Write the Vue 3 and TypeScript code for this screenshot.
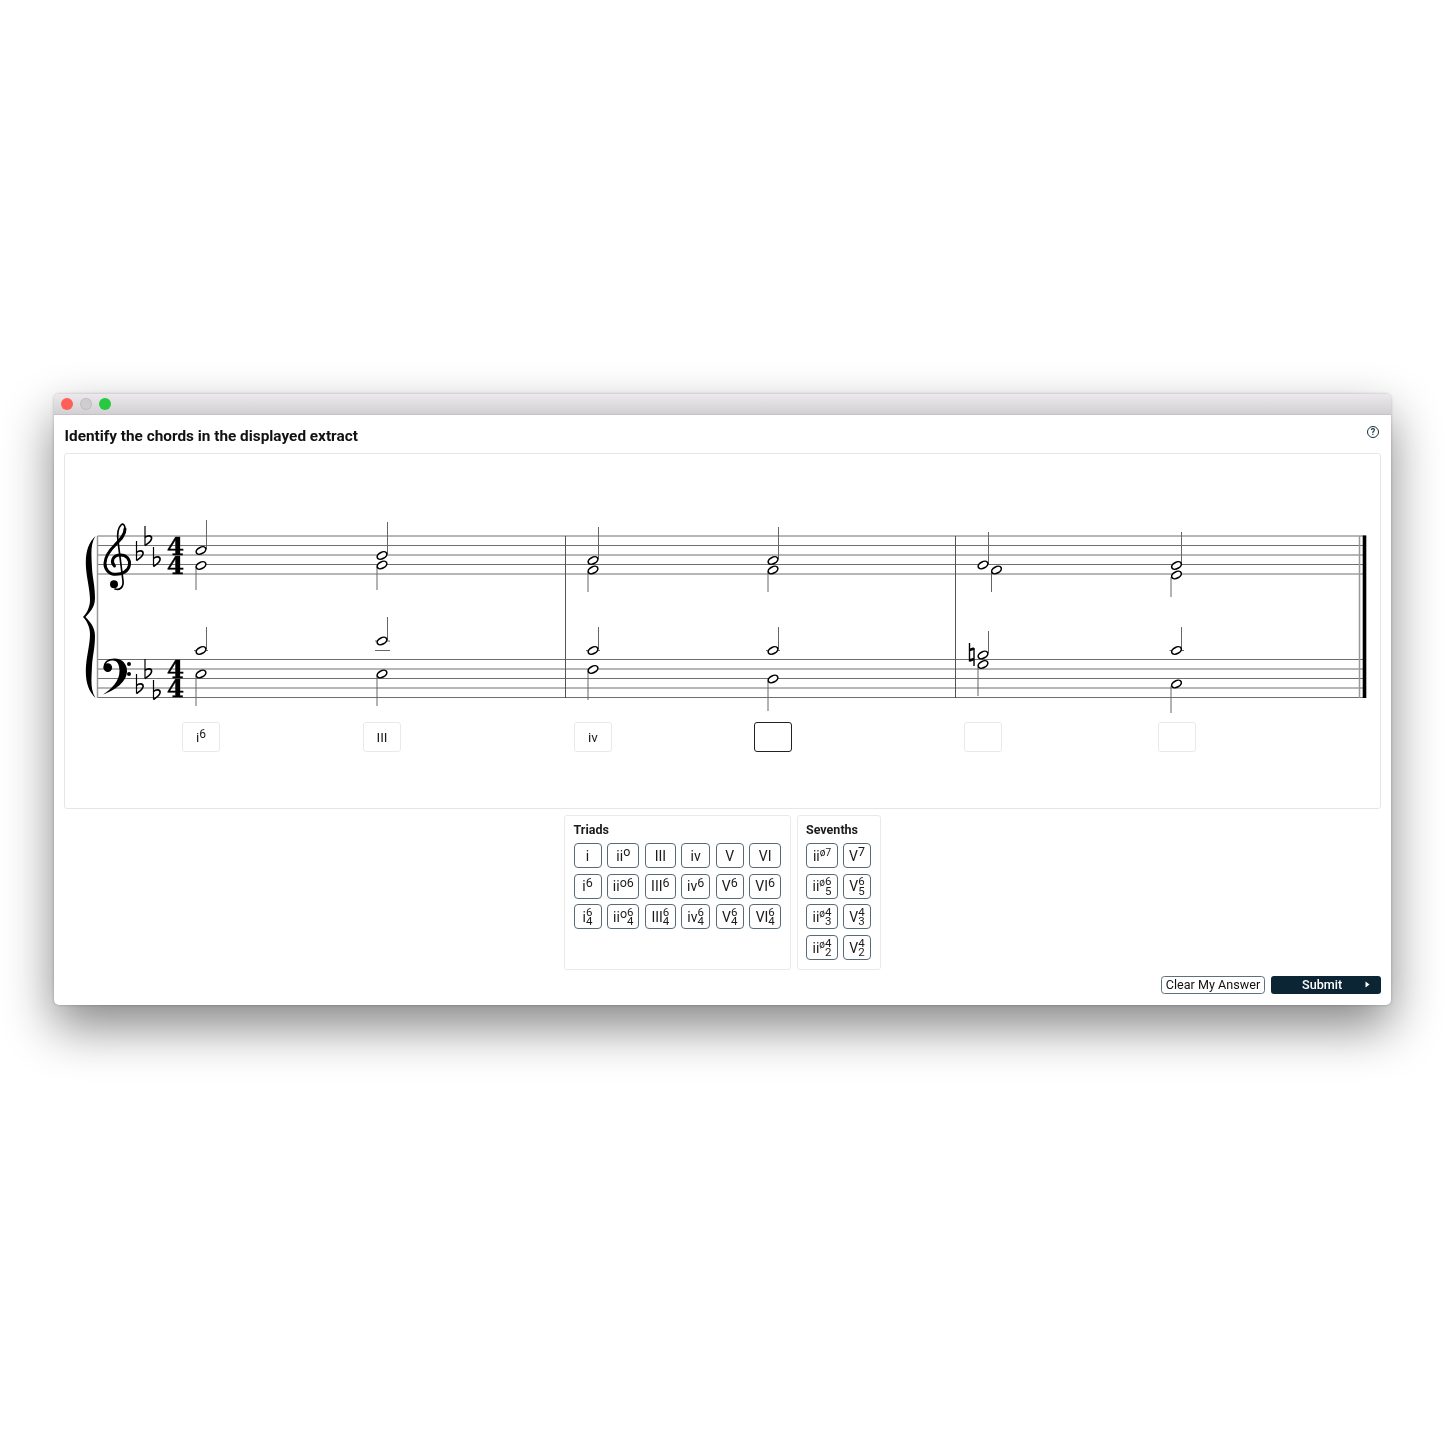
<script setup lang="ts">
interface Chord { root: string; sup?: string; top?: string; bot?: string }
interface Head { x: number; y: number }
interface Stem { x: number; y1: number; y2: number }
interface Slot { x: number; label?: Chord; active?: boolean }

const triadRoots = ['i', 'ii', 'III', 'iv', 'V', 'VI']
const triads: Chord[] = [
  ...triadRoots.map((r) => ({ root: r, sup: r === 'ii' ? 'o' : undefined })),
  ...triadRoots.map((r) => ({ root: r, sup: r === 'ii' ? 'o6' : '6' })),
  ...triadRoots.map((r) => ({ root: r, sup: r === 'ii' ? 'o' : undefined, top: '6', bot: '4' })),
]
const sevenths: Chord[] = [
  { root: 'ii', sup: 'ø7' }, { root: 'V', sup: '7' },
  { root: 'ii', sup: 'ø', top: '6', bot: '5' }, { root: 'V', top: '6', bot: '5' },
  { root: 'ii', sup: 'ø', top: '4', bot: '3' }, { root: 'V', top: '4', bot: '3' },
  { root: 'ii', sup: 'ø', top: '4', bot: '2' }, { root: 'V', top: '4', bot: '2' },
]
const slots: Slot[] = [
  { x: 117, label: { root: 'i', sup: '6' } },
  { x: 298, label: { root: 'III' } },
  { x: 509, label: { root: 'iv' } },
  { x: 689, active: true },
  { x: 899 },
  { x: 1092.5 },
]
const staffLines: number[] = [536, 545.5, 555, 564.5, 574, 659.5, 669, 678.5, 688, 697.5]
const flats: Head[] = [
  { x: 136.5, y: 541 }, { x: 145, y: 526 }, { x: 153.5, y: 547 },
  { x: 136.5, y: 674 }, { x: 145, y: 659 }, { x: 153.5, y: 680 },
]
const heads: Head[] = [
  { x: 201, y: 550.5 }, { x: 201, y: 565.5 }, { x: 382, y: 555.5 }, { x: 382, y: 565 },
  { x: 593, y: 560.5 }, { x: 593, y: 570 }, { x: 773, y: 560.5 }, { x: 773, y: 570 },
  { x: 983, y: 565 }, { x: 996.5, y: 570 }, { x: 1176.5, y: 565.5 }, { x: 1176.5, y: 575 },
  { x: 201, y: 650.5 }, { x: 201, y: 674 }, { x: 382, y: 641 }, { x: 382, y: 674 },
  { x: 593, y: 650.5 }, { x: 593, y: 669.5 }, { x: 773, y: 650.5 }, { x: 773, y: 679 },
  { x: 983, y: 655 }, { x: 983, y: 664.5 }, { x: 1176.5, y: 650.5 }, { x: 1176.5, y: 684 },
]
const stems: Stem[] = [
  { x: 206.5, y1: 520, y2: 549 }, { x: 196, y1: 567, y2: 590 },
  { x: 387.5, y1: 522, y2: 554 }, { x: 377, y1: 567, y2: 590 },
  { x: 598.5, y1: 527, y2: 559 }, { x: 588, y1: 572, y2: 592 },
  { x: 778.5, y1: 527, y2: 559 }, { x: 768, y1: 572, y2: 592 },
  { x: 988.5, y1: 532, y2: 564 }, { x: 991.5, y1: 572, y2: 592 },
  { x: 1181.5, y1: 532, y2: 564 }, { x: 1171, y1: 577, y2: 597 },
  { x: 206.5, y1: 627, y2: 649 }, { x: 196, y1: 676, y2: 706 },
  { x: 387.5, y1: 617, y2: 640 }, { x: 377, y1: 676, y2: 706 },
  { x: 598.5, y1: 627, y2: 649 }, { x: 588, y1: 672, y2: 700 },
  { x: 778.5, y1: 627, y2: 649 }, { x: 768, y1: 681, y2: 711 },
  { x: 988.5, y1: 631, y2: 653 }, { x: 978, y1: 667, y2: 696 },
  { x: 1181.5, y1: 627, y2: 649 }, { x: 1171, y1: 686, y2: 713 },
]
const ledgers: Stem[] = [
  { x: 194, y1: 208, y2: 650.5 }, { x: 375, y1: 390, y2: 650.5 }, { x: 375, y1: 390, y2: 641 },
  { x: 586, y1: 600, y2: 650.5 }, { x: 766, y1: 780, y2: 650.5 }, { x: 1169.5, y1: 1184, y2: 650.5 },
]
const timeSigs: number[] = [554.5, 573.5, 678, 697]
</script>

<template>
  <div class="page">
    <main class="window">
      <header class="titlebar">
        <i class="light red"></i>
        <i class="light grey"></i>
        <i class="light green"></i>
      </header>
      <div class="content">
        <div class="heading">
          <h1>Identify the chords in the displayed extract</h1>
          <span class="help">?</span>
        </div>

        <section class="score">
          <svg class="notation" viewBox="64 453 1317 356" width="1317" height="356">
            <g stroke="#6f6f6f" stroke-width="1">
              <line v-for="y in staffLines" :key="y" x1="97.5" x2="1366" :y1="y" :y2="y" />
              <line x1="97.5" x2="97.5" y1="536" y2="698" stroke="#999" stroke-width="1.5" />
            </g>
            <g stroke="#555" stroke-width="1">
              <line x1="565.5" x2="565.5" y1="536" y2="698" />
              <line x1="955.5" x2="955.5" y1="536" y2="698" />
            </g>
            <line x1="1359.5" x2="1359.5" y1="536" y2="698" stroke="#999" stroke-width="1.5" />
            <rect x="1362.7" y="535.5" width="3.6" height="162.5" fill="#000" />

            <!-- brace -->
            <path d="M95.5 536C88 543 85 553 86 568C87 580 90 590 90 600C90 608 86 614 83 617C86 620 90 626 90 634C90 644 87 654 86 666C85 681 88 691 95.5 698C90 689 91.5 679 92 666C92.5 656 95 648 95 636C95 626 89 621 85.5 617C89 613 95 608 95 598C95 586 92.5 578 92 568C91.5 555 90 545 95.5 536Z" fill="#000" />

            <!-- treble clef -->
            <g fill="none" stroke="#000" stroke-linecap="round">
              <path d="M114.5 566C110.5 562 112.5 555.5 119.5 555C126.5 554.5 130.5 559.5 129.3 565.5C128.2 571.5 122 574.3 116 574.3C108.5 574.3 104.8 569 105 563C105.3 555 111 549 115.5 544.5C120 540 125.2 535 125 529" stroke-width="3" />
              <path d="M125 529C125 524.5 122.8 523.2 121 525C118 528 117 533 118 541L123 581C123.8 587.5 119.5 590.5 115 589" stroke-width="1.7" />
            </g>
            <circle cx="114" cy="584.3" r="4" fill="#000" />

            <!-- bass clef -->
            <path d="M103.8 669C102.5 662 108 658.6 114.5 658.6C122 658.6 127 664 127 671C127 682 114.5 690.5 103 694.5C112 688.5 119.5 681 119.5 671C119.5 664 117 660.4 113 660.4C109 660.4 106 662 106 665Z" fill="#000" />
            <circle cx="107.8" cy="667.6" r="4.3" fill="#000" />
            <circle cx="129" cy="664" r="2" fill="#000" />
            <circle cx="129" cy="674" r="2" fill="#000" />

            <!-- key signature -->
            <g v-for="f in flats" :key="`${f.x}-${f.y}`" :transform="`translate(${f.x} ${f.y})`" fill="none" stroke="#000">
              <line x1="0" x2="0" y1="0" y2="19.5" stroke-width="1.2" />
              <path d="M0 11.5C2.5 9.2 6.6 9.2 6.6 12.2C6.6 15.2 3 17.2 0 19.5" stroke-width="1.6" />
            </g>

            <!-- time signature -->
            <text v-for="y in timeSigs" :key="y" class="timesig" x="175.5" :y="y" text-anchor="middle">4</text>

            <!-- ledger lines -->
            <line v-for="(l, i) in ledgers" :key="`l${i}`" :x1="l.x" :x2="l.y1" :y1="l.y2" :y2="l.y2" stroke="#666" stroke-width="1" />

            <!-- stems -->
            <line v-for="(s, i) in stems" :key="`s${i}`" :x1="s.x" :x2="s.x" :y1="s.y1" :y2="s.y2" stroke="#666" stroke-width="1" />

            <!-- note heads -->
            <ellipse v-for="(h, i) in heads" :key="`h${i}`" :cx="h.x" :cy="h.y" rx="5.2" ry="3.2" :transform="`rotate(-28 ${h.x} ${h.y})`" fill="#fff" stroke="#000" stroke-width="1.6" />

            <!-- natural -->
            <g stroke="#000" fill="none">
              <line x1="969.5" x2="969.5" y1="643" y2="661.5" stroke-width="1.4" />
              <line x1="974" x2="974" y1="648" y2="666" stroke-width="1.4" />
              <line x1="969.5" x2="974" y1="650" y2="648.5" stroke-width="2.6" />
              <line x1="969.5" x2="974" y1="660.5" y2="659" stroke-width="2.6" />
            </g>
          </svg>

          <div
            v-for="slot in slots"
            :key="slot.x"
            class="slot"
            :class="{ active: slot.active }"
            :style="{ left: slot.x + 'px' }"
          >
            <template v-if="slot.label">
              {{ slot.label.root }}<sup v-if="slot.label.sup">{{ slot.label.sup }}</sup>
            </template>
          </div>
        </section>

        <div class="palettes">
          <section class="palette triads">
            <h2>Triads</h2>
            <div class="grid triad-grid">
              <button v-for="(c, i) in triads" :key="i" type="button" class="chord">
                {{ c.root }}<sup v-if="c.sup">{{ c.sup }}</sup><span v-if="c.top" class="stack"><span>{{ c.top }}</span><span>{{ c.bot }}</span></span>
              </button>
            </div>
          </section>
          <section class="palette sevenths">
            <h2>Sevenths</h2>
            <div class="grid seventh-grid">
              <button v-for="(c, i) in sevenths" :key="i" type="button" class="chord">
                {{ c.root }}<sup v-if="c.sup" :class="{ tiny: c.sup.startsWith('ø') }">{{ c.sup }}</sup><span v-if="c.top" class="stack"><span>{{ c.top }}</span><span>{{ c.bot }}</span></span>
              </button>
            </div>
          </section>
        </div>

        <footer class="actions">
          <button type="button" class="clear">Clear My Answer</button>
          <button type="button" class="submit">
            <span>Submit</span>
            <svg width="5" height="7" viewBox="0 0 5 7"><path d="M0.5 0.5L4.5 3.5L0.5 6.5Z" fill="#fff" /></svg>
          </button>
        </footer>
      </div>
    </main>
  </div>
</template>

<style>
html, body { margin: 0; background: #fff; }
</style>

<style scoped>
.page {
  box-sizing: border-box;
  width: 1445px;
  height: 1445px;
  padding: 393.5px 54px 0;
  font-family: Roboto, sans-serif;
  color: #111;
}
.window {
  height: 611.5px;
  background: #fff;
  border-radius: 5px;
  box-shadow: 0 22px 50px rgba(0, 0, 0, 0.48), 0 0 3px rgba(0, 0, 0, 0.25);
  display: flex;
  flex-direction: column;
  overflow: hidden;
}
.titlebar {
  height: 21.5px;
  flex: none;
  background: linear-gradient(#ebe9eb, #d2d0d2);
  border-bottom: 1px solid #c4c2c4;
  box-sizing: border-box;
  display: flex;
  align-items: center;
  gap: 7px;
  padding-left: 7px;
}
.light { width: 12px; height: 12px; border-radius: 50%; display: block; }
.red { background: #ff5f57; }
.grey { background: #cfcdcf; box-shadow: inset 0 0 0 1px #c2c0c2; }
.green { background: #28c840; }
.content { padding: 0 10px; flex: 1; display: flex; flex-direction: column; will-change: transform; }
.heading {
  height: 38px;
  display: flex;
  justify-content: space-between;
  align-items: flex-start;
}
h1 {
  margin: 12px 0 0 0.5px;
  font-size: 15.35px;
  line-height: 19px;
  font-weight: 700;
  color: #111;
}
.help {
  box-sizing: border-box;
  width: 12px;
  height: 12px;
  margin: 11px 2px 0 0;
  border: 1.3px solid #12303f;
  border-radius: 50%;
  font-size: 9px;
  font-weight: 700;
  display: flex;
  align-items: center;
  justify-content: center;
  color: #12303f;
}
.score {
  position: relative;
  box-sizing: border-box;
  height: 356px;
  border: 1px solid #e6e6e6;
  border-radius: 3px;
}
.notation { position: absolute; left: -1px; top: -1px; display: block; }
.timesig {
  font-family: "DejaVu Serif", serif;
  font-weight: 700;
  font-size: 25px;
  stroke: #000;
  stroke-width: 0.3;
}
.slot {
  position: absolute;
  top: 268px;
  box-sizing: border-box;
  width: 38px;
  height: 30px;
  border: 1.5px solid #e9e9e9;
  border-radius: 3px;
  background: #fff;
  display: flex;
  align-items: center;
  justify-content: center;
  font-size: 13.5px;
  color: #1a1a1a;
}
.slot.active { border: 1.5px solid #222; }
.slot sup { font-size: 12px; line-height: 1; margin-top: -7px; align-self: center; vertical-align: baseline; }
.palettes {
  display: flex;
  justify-content: center;
  gap: 6px;
  margin-top: 6px;
}
.palette {
  box-sizing: border-box;
  height: 155px;
  border: 1.5px solid #e9e9e9;
  border-radius: 3px;
  padding: 7px 8.5px 0;
}
.triads { width: 226.5px; }
.sevenths { width: 84.5px; }
h2 {
  margin: 0 0 6px;
  font-size: 12.5px;
  line-height: 14px;
  font-weight: 700;
  color: #1b1b1b;
}
.grid { display: grid; gap: 5.7px; grid-auto-rows: 25px; }
.triad-grid { grid-template-columns: 28px 32px 30.5px 28.5px 28px 31.5px; column-gap: 5.8px; }
.seventh-grid { grid-template-columns: 32px 28px; column-gap: 5px; }
.chord {
  box-sizing: border-box;
  padding: 0;
  border: 1.2px solid #566b75;
  border-radius: 4px;
  background: #fff;
  font-family: inherit;
  font-size: 14px;
  color: #1a1a1a;
  display: flex;
  align-items: center;
  justify-content: center;
}
.chord sup { font-size: 12.5px; line-height: 1; margin-top: -6px; vertical-align: baseline; }
.chord sup.tiny { font-size: 10px; }
.stack {
  display: inline-flex;
  flex-direction: column;
  font-size: 11.5px;
  line-height: 9.2px;
  text-align: center;
  margin-top: 1px;
}
.actions {
  display: flex;
  justify-content: flex-end;
  gap: 6px;
  margin-top: 5.5px;
}
.actions button { font-family: inherit; height: 18.5px; padding: 0; box-sizing: border-box; }
.clear {
  width: 104px;
  background: #fff;
  border: 1px solid #5d717b;
  border-radius: 3.5px;
  font-size: 12.6px;
  color: #111;
}
.submit {
  width: 110px;
  background: #0b2534;
  border: none;
  border-radius: 3px;
  color: #fff;
  font-size: 12.6px;
  font-weight: 500;
  display: flex;
  align-items: center;
  justify-content: space-between;
  padding: 0 11px 0 31px !important;
}
</style>
